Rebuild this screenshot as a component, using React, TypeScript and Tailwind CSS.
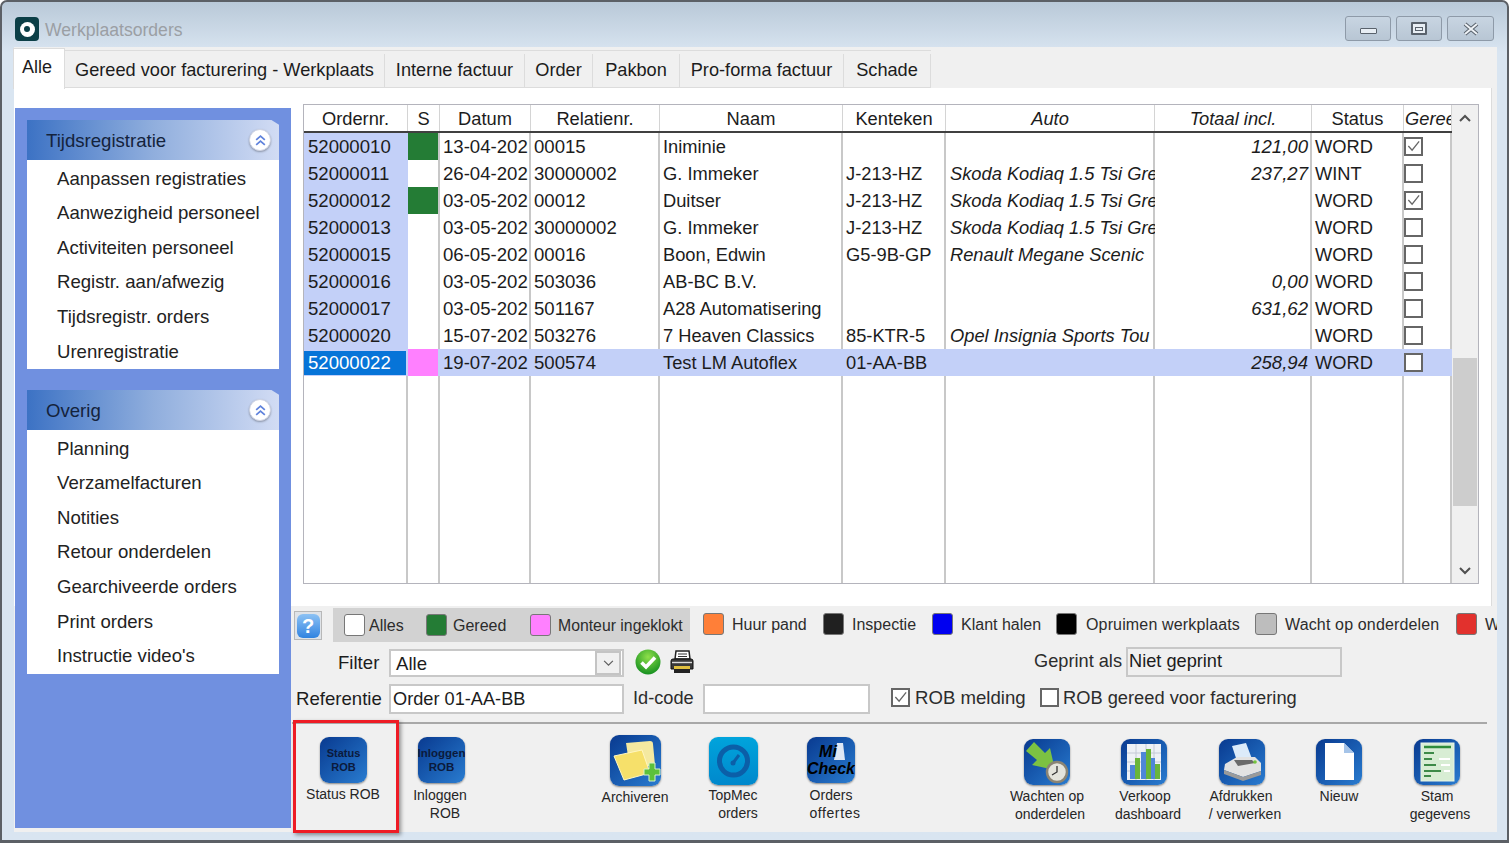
import type { ReactNode } from 'react'

const rows = [
  { id: '52000010', s: 'green', date: '13-04-202', rel: '00015', name: 'Iniminie', plate: '', car: '', total: '121,00', status: 'WORD', done: true },
  { id: '52000011', s: '', date: '26-04-202', rel: '30000002', name: 'G. Immeker', plate: 'J-213-HZ', car: 'Skoda Kodiaq 1.5 Tsi Gre', total: '237,27', status: 'WINT', done: false },
  { id: '52000012', s: 'green', date: '03-05-202', rel: '00012', name: 'Duitser', plate: 'J-213-HZ', car: 'Skoda Kodiaq 1.5 Tsi Gre', total: '', status: 'WORD', done: true },
  { id: '52000013', s: '', date: '03-05-202', rel: '30000002', name: 'G. Immeker', plate: 'J-213-HZ', car: 'Skoda Kodiaq 1.5 Tsi Gre', total: '', status: 'WORD', done: false },
  { id: '52000015', s: '', date: '06-05-202', rel: '00016', name: 'Boon, Edwin', plate: 'G5-9B-GP', car: 'Renault Megane Scenic', total: '', status: 'WORD', done: false },
  { id: '52000016', s: '', date: '03-05-202', rel: '503036', name: 'AB-BC B.V.', plate: '', car: '', total: '0,00', status: 'WORD', done: false },
  { id: '52000017', s: '', date: '03-05-202', rel: '501167', name: 'A28 Automatisering', plate: '', car: '', total: '631,62', status: 'WORD', done: false },
  { id: '52000020', s: '', date: '15-07-202', rel: '503276', name: '7 Heaven Classics', plate: '85-KTR-5', car: 'Opel Insignia Sports Tou', total: '', status: 'WORD', done: false },
  { id: '52000022', s: 'pink', date: '19-07-202', rel: '500574', name: 'Test LM Autoflex', plate: '01-AA-BB', car: '', total: '258,94', status: 'WORD', done: false },
]

const columns = 'grid grid-cols-[104px_32px_91px_129px_183px_103px_209px_157px_92px_48px]'

const headers = [
  { label: 'Ordernr.', cls: '' },
  { label: 'S', cls: '' },
  { label: 'Datum', cls: '' },
  { label: 'Relatienr.', cls: '' },
  { label: 'Naam', cls: '' },
  { label: 'Kenteken', cls: '' },
  { label: 'Auto', cls: 'italic' },
  { label: 'Totaal incl.', cls: 'italic' },
  { label: 'Status', cls: '' },
  { label: 'Gereed', cls: 'italic justify-start pl-px' },
]

const legend = [
  { label: 'Huur pand', cls: 'left-[703px] w-[21px] bg-[#ff7f38]', text: 'left-[732px]' },
  { label: 'Inspectie', cls: 'left-[823px] w-[21px] bg-[#202020]', text: 'left-[852px]' },
  { label: 'Klant halen', cls: 'left-[932px] w-[21px] bg-[#0000f0]', text: 'left-[961px]' },
  { label: 'Opruimen werkplaats', cls: 'left-[1056px] w-[21px] bg-black', text: 'left-[1086px] tracking-[0.15px]' },
  { label: 'Wacht op onderdelen', cls: 'left-[1255px] w-[22px] bg-[#bdbdbd]', text: 'left-[1285px] tracking-[0.15px]' },
  { label: 'W', cls: 'left-[1456px] w-[21px] bg-[#e2312d]', text: 'left-[1485px]' },
]

function Tile({ children, cls }: { children?: ReactNode; cls: string }) {
  return (
    <div className={`absolute overflow-hidden rounded-[9px] bg-gradient-to-br from-[#0a3a90] to-[#2a7cd0] shadow-[0_1px_2px_rgba(0,0,0,0.45)] ${cls}`}>
      {children}
    </div>
  )
}

function Label({ lines, cls }: { lines: [string, string?]; cls: string }) {
  return (
    <div className={`absolute -translate-x-1/2 text-center text-[14px] leading-[18px] whitespace-nowrap text-[#262626] ${cls}`}>
      {lines.map((line) => <div key={line}>{line}</div>)}
    </div>
  )
}

function Checkbox({ checked, cls }: { checked: boolean; cls: string }) {
  return (
    <div className={`flex h-[19px] w-[19px] items-center justify-center border-2 border-[#666] bg-white ${cls}`}>
      {checked && (
        <svg viewBox="0 0 16 16" className="h-[15px] w-[15px]" fill="none" stroke="#666" strokeWidth="1.4">
          <path d="M2.5 7.5 L6.5 12 L14 2.5" />
        </svg>
      )}
    </div>
  )
}

function SideGroup({ title, items, cls }: { title: string; items: string[]; cls: string }) {
  return (
    <div className={`absolute left-[27px] w-[252px] ${cls}`}>
      <div className="relative flex h-[40px] items-center bg-gradient-to-r from-[#3c72c4] via-[#90aedd] to-[#d2dcf4] pt-[2px] pl-[19px] text-[#14233c] [clip-path:polygon(0_0,97%_0,100%_12%,100%_100%,0_100%)]">
        {title}
        <div className="absolute top-[9px] left-[222px] flex h-[22px] w-[22px] items-center justify-center rounded-full border border-[#cfd4e4] bg-white shadow-[0_1px_2px_rgba(0,0,0,0.3)]">
          <svg viewBox="0 0 12 12" className="h-[13px] w-[13px]" fill="none" stroke="#5f82dc" strokeWidth="1.6">
            <path d="M2 5.5 L6 2 L10 5.5 M2 10 L6 6.5 L10 10" />
          </svg>
        </div>
      </div>
      <div className="flex flex-col bg-white pt-[1.4px] pb-[0.6px] pl-[30px] text-[#222]">
        {items.map((item) => (
          <div key={item} className="flex h-[34.57px] items-center whitespace-nowrap">{item}</div>
        ))}
      </div>
    </div>
  )
}

export default function App() {
  return (
    <div className="relative h-[843px] w-[1509px] overflow-hidden bg-white [font-family:Liberation_Sans,sans-serif] text-[18.6px] text-[#1c1c1c]">
      {/* window frame */}
      <div className="absolute inset-0 rounded-t-[7px] border-x-2 border-t-2 border-b-[3px] border-[#5c6066] bg-gradient-to-b from-[#b9c9d8] from-0% to-[#d9e5f1] to-[6%]" />
      <div className="absolute top-[47px] left-[14px] h-[785px] w-[1483px] bg-[#f0f0f0]" />

      {/* title bar */}
      <div className="absolute top-[17px] left-[15px] flex h-[24px] w-[24px] items-center justify-center rounded-[4px] bg-[#0c3f47]">
        <div className="flex h-[15px] w-[15px] items-center justify-center rounded-full bg-white">
          <div className="h-[6px] w-[6px] rounded-full bg-[#0c3f47]" />
        </div>
      </div>
      <div className="absolute top-[20px] left-[45px] text-[17.6px] leading-[21px] text-[#9b9fa4]">Werkplaatsorders</div>
      <div className="absolute top-[16px] left-[1345px] flex gap-[5px]">
        <div className="flex h-[25px] w-[46px] items-center justify-center rounded-[3px] border border-[#8e9aa8] bg-gradient-to-b from-[#c8d5e2] to-[#b8c6d4]">
          <div className="mt-[4px] h-[6px] w-[17px] rounded-[1px] border border-[#59626c] bg-[#e8eef4]" />
        </div>
        <div className="flex h-[25px] w-[46px] items-center justify-center rounded-[3px] border border-[#8e9aa8] bg-gradient-to-b from-[#c8d5e2] to-[#b8c6d4]">
          <div className="flex h-[13px] w-[16px] items-center justify-center rounded-[1px] border-2 border-[#59626c] bg-[#e8eef4]">
            <div className="h-[4px] w-[8px] border border-[#59626c]" />
          </div>
        </div>
        <div className="flex h-[25px] w-[47px] items-center justify-center rounded-[3px] border border-[#8e9aa8] bg-gradient-to-b from-[#c8d5e2] to-[#b8c6d4]">
          <svg viewBox="0 0 18 14" className="h-[14px] w-[18px]" fill="none">
            <path d="M3 2 L15 12 M15 2 L3 12" stroke="#59626c" strokeWidth="4" />
            <path d="M3 2 L15 12 M15 2 L3 12" stroke="#eef2f6" strokeWidth="2" />
          </svg>
        </div>
      </div>

      {/* tabs */}
      <div className="absolute top-[50px] left-[65px] flex h-[38px] border-y border-[#dcdcdc] pt-[3px] text-[18.2px]">
        <div className="flex w-[320px] items-center justify-center border-r border-[#dcdcdc]">Gereed voor facturering - Werkplaats</div>
        <div className="flex w-[140px] items-center justify-center border-r border-[#dcdcdc]">Interne factuur</div>
        <div className="flex w-[68px] items-center justify-center border-r border-[#dcdcdc]">Order</div>
        <div className="flex w-[87px] items-center justify-center border-r border-[#dcdcdc]">Pakbon</div>
        <div className="flex w-[164px] items-center justify-center border-r border-[#dcdcdc]">Pro-forma factuur</div>
        <div className="flex w-[87px] items-center justify-center border-r border-[#dcdcdc]">Schade</div>
      </div>

      {/* white page */}
      <div className="absolute top-[88px] left-[14px] h-[518px] w-[1478px] border-r border-[#dcdcdc] bg-white" />
      <div className="absolute top-[48px] left-[13px] flex h-[41px] w-[52px] items-center border-x border-t border-[#dcdcdc] bg-white pb-[3px] pl-[8px] text-[18px]">Alle</div>

      {/* sidebar */}
      <div className="absolute top-[108px] left-[15px] h-[720px] w-[276px] bg-[#7090e0]" />
      <SideGroup
        title="Tijdsregistratie"
        items={['Aanpassen registraties', 'Aanwezigheid personeel', 'Activiteiten personeel', 'Registr. aan/afwezig', 'Tijdsregistr. orders', 'Urenregistratie']}
        cls="top-[120px]"
      />
      <SideGroup
        title="Overig"
        items={['Planning', 'Verzamelfacturen', 'Notities', 'Retour onderdelen', 'Gearchiveerde orders', 'Print orders', "Instructie video's"]}
        cls="top-[390px]"
      />

      {/* table */}
      <div className="absolute top-[104px] left-[303px] h-[480px] w-[1176px] border border-[#b4b4bc] bg-white">
        <div className={`${columns} h-[28px] w-[1148px] overflow-hidden border-b-2 border-[#404040] text-[18.3px]`}>
          {headers.map((h) => (
            <div key={h.label} className={`flex items-center justify-center overflow-hidden border-r border-[#d4d4d4] pt-[2px] whitespace-nowrap ${h.cls}`}>{h.label}</div>
          ))}
        </div>
        {/* column lines */}
        <div className={`${columns} absolute top-[28px] left-0 h-[450px] w-[1148px]`}>
          {headers.map((h) => <div key={h.label} className="border-r-2 border-[#c8c8c8]" />)}
        </div>
        <div className="relative w-[1148px]">
          {rows.map((row, i) => {
            const selected = i === rows.length - 1
            return (
              <div key={row.id} className={`${columns} h-[27px] leading-[27px] whitespace-nowrap ${selected ? 'bg-[#c3d0f8]' : ''}`}>
                <div className={selected ? '' : 'bg-[#c3d0f8] pl-[4px]'}>
                  {selected
                    ? <div className="mt-[2px] h-[24px] w-[102px] bg-[#0674d8] pl-[4px] leading-[24px] text-white">{row.id}</div>
                    : row.id}
                </div>
                <div className={`mr-[2px] ${row.s === 'green' ? 'bg-[#247c35]' : row.s === 'pink' ? 'bg-[#ff80ff]' : 'bg-white'}`} />
                <div className="overflow-hidden pl-[3px]">{row.date}</div>
                <div className="overflow-hidden pl-[3px]">{row.rel}</div>
                <div className="overflow-hidden pl-[3px] text-[18.3px]">{row.name}</div>
                <div className="overflow-hidden pl-[3px] text-[18.3px]">{row.plate}</div>
                <div className="overflow-hidden pl-[4px] text-[18.3px] italic">{row.car}</div>
                <div className="overflow-hidden pr-[4px] text-right italic">{row.total}</div>
                <div className="overflow-hidden pl-[3px] text-[18.3px]">{row.status}</div>
                <div className="flex items-center"><Checkbox checked={row.done} cls="" /></div>
              </div>
            )
          })}
        </div>
        {/* scrollbar */}
        <div className="absolute top-0 left-[1148px] flex h-[478px] w-[26px] flex-col items-center bg-[#f0f0f0]">
          <svg viewBox="0 0 12 8" className="mt-[9px] h-[8px] w-[12px]" fill="none" stroke="#505050" strokeWidth="2"><path d="M1 7 L6 2 L11 7" /></svg>
          <div className="absolute top-[253px] h-[148px] w-[24px] bg-[#cdcdcd]" />
          <svg viewBox="0 0 12 8" className="absolute bottom-[8px] h-[8px] w-[12px]" fill="none" stroke="#505050" strokeWidth="2"><path d="M1 1 L6 6 L11 1" /></svg>
        </div>
      </div>

      {/* legend */}
      <div className="absolute top-[611px] left-[294px] flex h-[29px] w-[28px] items-center justify-center border border-[#b8b8b8] bg-[#dfe3e8]">
        <div className="flex h-[24px] w-[23px] items-center justify-center rounded-[6px] bg-gradient-to-b from-[#8cc2f4] to-[#2f83e0] text-[20px] font-bold text-white">?</div>
      </div>
      <div className="absolute top-[608px] left-[333px] h-[34px] w-[357px] bg-[#d2d2d2]" />
      <div className="absolute top-[614px] left-[344px] h-[22px] w-[21px] rounded-[3px] border border-[#777] bg-white" />
      <div className="absolute top-[614px] left-[426px] h-[22px] w-[21px] rounded-[3px] border border-[#777] bg-[#247c35]" />
      <div className="absolute top-[614px] left-[530px] h-[22px] w-[21px] rounded-[3px] border border-[#777] bg-[#ff80ff]" />
      <div className="absolute top-[616px] left-[369px] text-[16px] leading-[19px] text-[#2c2c2c]">Alles</div>
      <div className="absolute top-[616px] left-[453px] text-[16px] leading-[19px] text-[#2c2c2c]">Gereed</div>
      <div className="absolute top-[616px] left-[558px] text-[15.8px] leading-[19px] text-[#2c2c2c]">Monteur ingeklokt</div>
      <div className="absolute top-[608px] left-0 h-[34px] w-[1497px] overflow-hidden">
        {legend.map((item) => (
          <div key={item.label}>
            <div className={`absolute top-[5px] h-[22px] rounded-[3px] border border-[#777] ${item.cls}`} />
            <div className={`absolute top-[7px] text-[16px] leading-[19px] whitespace-nowrap text-[#2c2c2c] ${item.text}`}>{item.label}</div>
          </div>
        ))}
      </div>

      {/* filter row */}
      <div className="absolute top-[652px] left-[338px] leading-[22px]">Filter</div>
      <div className="absolute top-[649px] left-[389px] flex h-[28px] w-[235px] items-center border-2 border-[#c8c8c8] bg-white pt-[2px] pl-[5px]">
        Alle
        <div className="absolute top-0 right-[1px] flex h-[24px] w-[26px] items-center justify-center border-2 border-[#c4c4c4] bg-[#f0f0f0]">
          <svg viewBox="0 0 12 8" className="h-[7px] w-[11px]" fill="none" stroke="#606060" strokeWidth="1.4"><path d="M1 1 L6 6 L11 1" /></svg>
        </div>
      </div>
      <svg viewBox="0 0 26 26" className="absolute top-[649px] left-[635px] h-[26px] w-[26px]">
        <defs>
          <radialGradient id="ok" cx="50%" cy="30%" r="75%">
            <stop offset="0%" stopColor="#8fe04a" />
            <stop offset="100%" stopColor="#0d8a1d" />
          </radialGradient>
        </defs>
        <circle cx="13" cy="13" r="12.5" fill="url(#ok)" />
        <path d="M6.5 13.5 L11 18 L20 8.5" fill="none" stroke="#fff" strokeWidth="3.6" />
      </svg>
      <svg viewBox="0 0 26 24" className="absolute top-[650px] left-[669px] h-[24px] w-[26px]">
        <path d="M7 1 H20 L21 9 H6 Z" fill="#fff" stroke="#222" strokeWidth="1.5" />
        <path d="M9 4 H18 M9 6.5 H18" stroke="#333" strokeWidth="1" />
        <path d="M2 11 Q2 9 4 9 H22 Q24 9 24 11 V19 H2 Z" fill="#3a3a3a" stroke="#111" />
        <path d="M3 12.5 H23" stroke="#ddd" strokeWidth="1.4" />
        <rect x="5" y="16" width="16" height="3" fill="#e0c040" />
        <path d="M5 19 H21 V23 H5 Z" fill="#222" />
      </svg>
      <div className="absolute top-[650px] right-[387px] text-[18.2px] leading-[22px] text-[#2c2c2c]">Geprint als</div>
      <div className="absolute top-[647px] left-[1126px] flex h-[30px] w-[216px] items-center border-2 border-[#c8c8c8] bg-[#f0f0f0] pl-[1px] text-[18.2px]">Niet geprint</div>

      {/* referentie row */}
      <div className="absolute top-[688px] left-[296px] leading-[22px]">Referentie</div>
      <div className="absolute top-[684px] left-[389px] flex h-[30px] w-[235px] items-center border-2 border-[#c8c8c8] bg-white pt-[2px] pl-[2px] text-[18.2px]">Order 01-AA-BB</div>
      <div className="absolute top-[687px] left-[633px] text-[18.2px] leading-[22px] text-[#2c2c2c]">Id-code</div>
      <div className="absolute top-[684px] left-[703px] h-[30px] w-[167px] border-2 border-[#c8c8c8] bg-white" />
      <Checkbox checked cls="absolute top-[688px] left-[891px]" />
      <div className="absolute top-[687px] left-[915px] leading-[22px] text-[#2c2c2c]">ROB melding</div>
      <Checkbox checked={false} cls="absolute top-[688px] left-[1040px]" />
      <div className="absolute top-[687px] left-[1063px] text-[18.3px] leading-[22px] text-[#2c2c2c]">ROB gereed voor facturering</div>
      <div className="absolute top-[722px] left-[292px] h-[2px] w-[1195px] bg-[#a8a8a8]" />

      {/* toolbar: selected button */}
      <div className="absolute top-[720px] left-[293px] h-[113px] w-[106px] border-[3px] border-[#ee1c25] shadow-[2px_2px_4px_rgba(0,0,0,0.4)]" />

      <Tile cls="top-[737px] left-[320px] h-[46px] w-[47px]">
        <div className="flex h-full flex-col items-center justify-center text-[11px] leading-[14px] font-bold text-[#0b1a3c]"><span>Status</span><span>ROB</span></div>
      </Tile>
      <Label lines={['Status ROB']} cls="top-[785px] left-[343px]" />

      <Tile cls="top-[737px] left-[418px] h-[46px] w-[47px]">
        <div className="flex h-full flex-col items-center justify-center text-[11.5px] leading-[14px] font-bold text-[#0b1a3c]"><span>Inloggen</span><span>ROB</span></div>
      </Tile>
      <Label lines={['Inloggen']} cls="top-[786px] left-[440px]" />
      <Label lines={['ROB']} cls="top-[804px] left-[445px]" />

      <Tile cls="top-[735px] left-[610px] h-[51px] w-[51px]">
        <svg viewBox="0 0 51 51" className="h-full w-full">
          <path d="M16 8 L40 6 Q43 6 43 9 L45 30 L20 34 Z" fill="#f4e9a0" />
          <path d="M4 21 L32 15 L40 38 L14 45 Z" fill="#f6e06a" stroke="#fff6c0" strokeWidth="1" />
          <path d="M34 34 H39 V28 H45 V34 H50 V40 H45 V46 H39 V40 H34 Z" fill="#5cc13a" stroke="#d8f2c8" strokeWidth="1" />
        </svg>
      </Tile>
      <Label lines={['Archiveren']} cls="top-[788px] left-[635px]" />

      <div className="absolute top-[737px] left-[709px] h-[48px] w-[49px] overflow-hidden rounded-[9px] bg-gradient-to-b from-[#00a4dc] to-[#0088cc] shadow-[0_1px_2px_rgba(0,0,0,0.45)]">
        <svg viewBox="0 0 49 48" className="h-full w-full" fill="none">
          <circle cx="24.5" cy="24" r="14" stroke="#0b5fa8" strokeWidth="5" />
          <path d="M24 26 L30 18" stroke="#0b5fa8" strokeWidth="3" />
          <circle cx="24" cy="26" r="2.5" fill="#0b5fa8" />
        </svg>
      </div>
      <Label lines={['TopMec']} cls="top-[786px] left-[733px]" />
      <Label lines={['orders']} cls="top-[804px] left-[738px]" />

      <Tile cls="top-[737px] left-[807px] h-[46px] w-[48px]">
        <svg viewBox="0 0 48 46" className="absolute inset-0 h-full w-full">
          <path d="M30 6 L36 6 L38 23 L27 23 Z" fill="#dfe8f4" />
        </svg>
        <div className="relative flex h-full flex-col items-center justify-center text-[16px] leading-[17px] font-bold text-black italic"><span className="-ml-[6px]">Mi</span><span>Check</span></div>
      </Tile>
      <Label lines={['Orders']} cls="top-[786px] left-[831px]" />
      <Label lines={['offertes']} cls="top-[804px] left-[835px] tracking-[0.6px]" />

      <Tile cls="top-[739px] left-[1024px] h-[46px] w-[46px]">
        <svg viewBox="0 0 46 46" className="h-full w-full">
          <path d="M10 3 L21 14 L26 9 L31 31 L8 26 L13 21 L2 12 Z" fill="#7cc242" />
          <circle cx="33" cy="33" r="10" fill="#e4e4dc" stroke="#8a8474" strokeWidth="2.5" />
          <path d="M33 27 V33 L28 36" fill="none" stroke="#333" strokeWidth="1.3" />
        </svg>
      </Tile>
      <Label lines={['Wachten op']} cls="top-[787px] left-[1047px]" />
      <Label lines={['onderdelen']} cls="top-[805px] left-[1050px]" />

      <Tile cls="top-[739px] left-[1121px] h-[46px] w-[46px]">
        <svg viewBox="0 0 46 46" className="h-full w-full">
          <rect x="6" y="5" width="34" height="36" fill="#eef1f6" />
          <path d="M6 14 H40 M6 23 H40 M6 32 H40 M15 5 V41 M25 5 V41 M33 5 V41" stroke="#c4cad6" strokeWidth="1" />
          <rect x="9" y="26" width="5" height="14" fill="#4f86d8" />
          <rect x="14" y="19" width="5" height="21" fill="#6ab53a" />
          <rect x="20" y="13" width="5" height="27" fill="#4f86d8" />
          <rect x="25" y="10" width="5" height="30" fill="#6ab53a" />
          <rect x="30" y="19" width="4" height="21" fill="#4f86d8" />
          <rect x="34" y="25" width="5" height="15" fill="#6ab53a" />
        </svg>
      </Tile>
      <Label lines={['Verkoop']} cls="top-[787px] left-[1145px]" />
      <Label lines={['dashboard']} cls="top-[805px] left-[1148px]" />

      <Tile cls="top-[739px] left-[1219px] h-[46px] w-[46px]">
        <svg viewBox="0 0 46 46" className="h-full w-full">
          <path d="M13 7 L27 4 L33 20 L18 22 Z" fill="#dcebfa" />
          <path d="M6 25 L18 18 H36 L42 24 V32 L24 38 L5 31 Z" fill="#e2e2e2" />
          <path d="M5 31 L24 38 L42 32 V36 L24 42 L5 35 Z" fill="#9a9a9a" />
          <path d="M15 21 L33 21 L36 24 L19 27 Z" fill="#6a6a6a" />
          <circle cx="36" cy="23" r="1.8" fill="#74c43c" />
        </svg>
      </Tile>
      <Label lines={['Afdrukken']} cls="top-[787px] left-[1241px]" />
      <Label lines={['/ verwerken']} cls="top-[805px] left-[1245px]" />

      <Tile cls="top-[739px] left-[1316px] h-[46px] w-[46px]">
        <svg viewBox="0 0 46 46" className="h-full w-full">
          <path d="M9 4 H28 L38 14 V41 H9 Z" fill="#fff" />
          <path d="M28 4 L38 14 H28 Z" fill="#a6c4e8" />
        </svg>
      </Tile>
      <Label lines={['Nieuw']} cls="top-[787px] left-[1339px]" />

      <Tile cls="top-[739px] left-[1414px] h-[46px] w-[46px]">
        <svg viewBox="0 0 46 46" className="h-full w-full">
          <rect x="7" y="4" width="33" height="38" fill="#d8edd4" stroke="#e8f4e6" />
          <path d="M10 8 H37" stroke="#2e8c3c" strokeWidth="2.4" />
          <path d="M10 14 H20 M10 20 H18 M10 26 H22 M10 32 H27 M10 37 H17" stroke="#3d8a48" strokeWidth="2" />
          <path d="M25 20 H36 M27 26 H36 M30 32 H36" stroke="#ffffff" strokeWidth="2" />
        </svg>
      </Tile>
      <Label lines={['Stam']} cls="top-[787px] left-[1437px]" />
      <Label lines={['gegevens']} cls="top-[805px] left-[1440px]" />
    </div>
  )
}
